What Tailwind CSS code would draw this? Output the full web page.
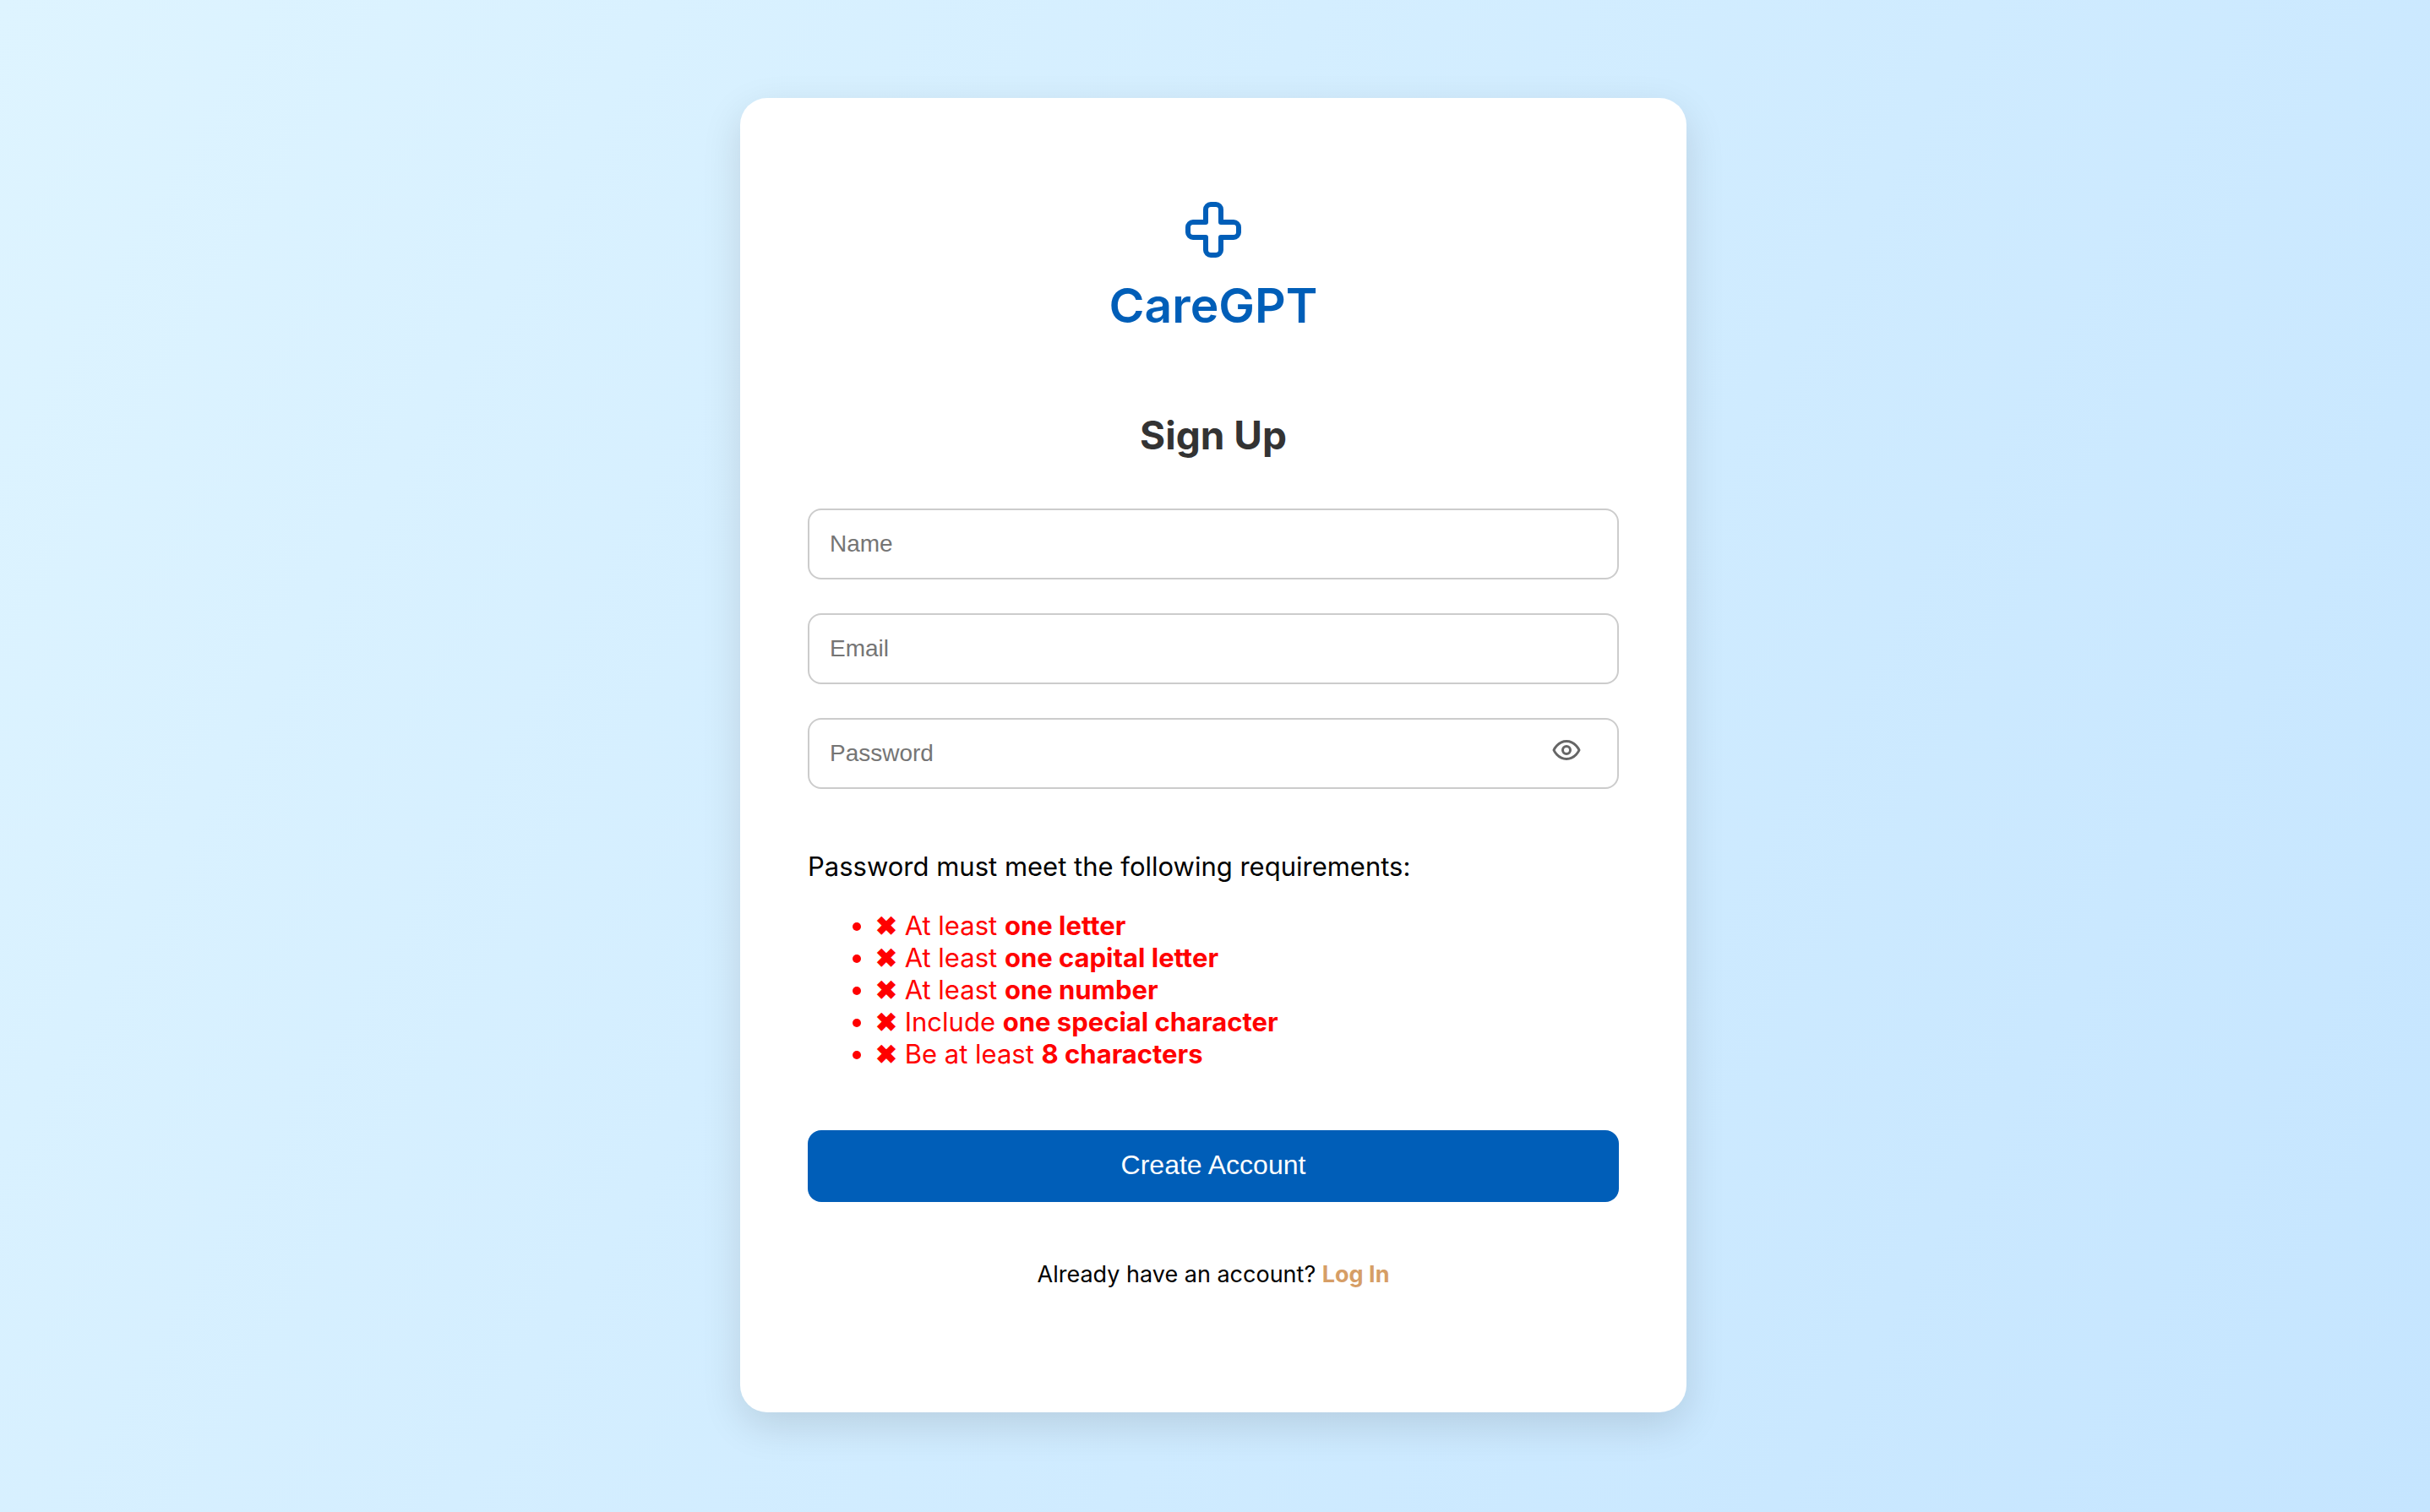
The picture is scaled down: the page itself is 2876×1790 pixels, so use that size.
<!DOCTYPE html>
<html lang="en">
<head>
<meta charset="utf-8">
<meta name="viewport" content="width=device-width, initial-scale=1">
<title>CareGPT – Sign Up</title>
<script src="https://cdn.jsdelivr.net/npm/@tailwindcss/browser@4"></script>
</head>
<body class="font-[Inter,sans-serif] text-black">
<main class="flex min-h-screen items-center justify-center bg-[linear-gradient(120deg,#def4ff,#c5e5ff)] pt-8 pr-1 pb-[34px]">
  <section class="w-full max-w-[1120px] rounded-[32px] bg-white px-20 pt-30 pb-36 shadow-[0_16px_48px_rgba(0,0,0,0.12)]">
    <header class="flex flex-col items-center gap-4 text-[#005eb8]">
      <svg class="size-18" viewBox="0 0 24 24" fill="none" stroke="currentColor" stroke-width="2" stroke-linecap="round" stroke-linejoin="round" aria-hidden="true"><path d="M11 2a2 2 0 0 0-2 2v5H4a2 2 0 0 0-2 2v2c0 1.1.9 2 2 2h5v5c0 1.1.9 2 2 2h2a2 2 0 0 0 2-2v-5h5a2 2 0 0 0 2-2v-2a2 2 0 0 0-2-2h-5V4a2 2 0 0 0-2-2h-2z"/></svg>
      <h1 class="text-[57px] leading-[76px] font-semibold">CareGPT</h1>
    </header>
    <h2 class="mt-[87px] text-center text-[46px] leading-[56px] font-bold text-[#333]">Sign Up</h2>
    <form class="mt-[59px] flex flex-col">
      <div class="flex flex-col gap-10 font-['Liberation_Sans',sans-serif] text-[28px] leading-8">
        <input type="text" aria-label="Name" placeholder="Name" class="h-[84px] w-full rounded-2xl border-2 border-[#ccc] px-6 placeholder:text-[#757575]">
        <input type="email" aria-label="Email" placeholder="Email" class="h-[84px] w-full rounded-2xl border-2 border-[#ccc] px-6 placeholder:text-[#757575]">
        <div class="relative">
          <input type="password" aria-label="Password" placeholder="Password" class="block h-[84px] w-full rounded-2xl border-2 border-[#ccc] pr-24 pl-6 placeholder:text-[#757575]">
          <button type="button" aria-label="Show password" class="absolute top-5 right-11 text-[#666]">
            <svg class="size-9" viewBox="0 0 24 24" fill="none" stroke="currentColor" stroke-width="2" stroke-linecap="round" stroke-linejoin="round" aria-hidden="true"><path d="M2 12s3-7 10-7 10 7 10 7-3 7-10 7-10-7-10-7Z"/><circle cx="12" cy="12" r="3"/></svg>
          </button>
        </div>
      </div>
      <div class="mt-[73px] text-[31px] leading-[38px]">
        <p>Password must meet the following requirements:</p>
        <ul class="mt-8 list-disc pl-20 text-[#f00]">
          <li><b>✖</b> At least <b>one letter</b></li>
          <li><b>✖</b> At least <b>one capital letter</b></li>
          <li><b>✖</b> At least <b>one number</b></li>
          <li><b>✖</b> Include <b>one special character</b></li>
          <li><b>✖</b> Be at least <b>8 characters</b></li>
        </ul>
      </div>
      <button type="submit" class="mt-[71px] h-[85px] rounded-2xl bg-[#005eb8] pb-1 font-['Liberation_Sans',sans-serif] text-[32px] text-white">Create Account</button>
    </form>
    <p class="mt-[69px] pb-[2px] text-center text-[27px] leading-[34px]">Already have an account? <a href="#" class="font-bold text-[#d69e66]">Log In</a></p>
  </section>
</main>
</body>
</html>
